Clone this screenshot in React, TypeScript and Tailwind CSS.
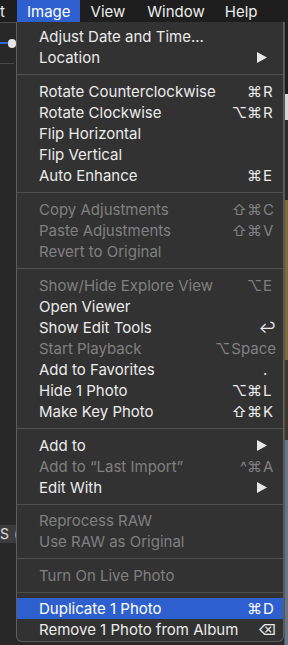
import React from 'react';

type Entry =
  | 'sep'
  | 'sep12'
  | {
      label: string;
      mods?: string;
      keyName?: string;
      off?: boolean;
      sub?: boolean;
      active?: boolean;
    };

const MENU: Entry[] = [
  { label: 'Adjust Date and Time...' },
  { label: 'Location', sub: true },
  'sep',
  { label: 'Rotate Counterclockwise', mods: '⌘', keyName: 'R' },
  { label: 'Rotate Clockwise', mods: '⌥⌘', keyName: 'R' },
  { label: 'Flip Horizontal' },
  { label: 'Flip Vertical' },
  { label: 'Auto Enhance', mods: '⌘', keyName: 'E' },
  'sep',
  { label: 'Copy Adjustments', mods: '⇧⌘', keyName: 'C', off: true },
  { label: 'Paste Adjustments', mods: '⇧⌘', keyName: 'V', off: true },
  { label: 'Revert to Original', off: true },
  'sep',
  { label: 'Show/Hide Explore View', mods: '⌥', keyName: 'E', off: true },
  { label: 'Open Viewer' },
  { label: 'Show Edit Tools', mods: '', keyName: '↩' },
  { label: 'Start Playback', mods: '⌥', keyName: 'Space', off: true },
  { label: 'Add to Favorites', mods: '', keyName: '.' },
  { label: 'Hide 1 Photo', mods: '⌥⌘', keyName: 'L' },
  { label: 'Make Key Photo', mods: '⇧⌘', keyName: 'K' },
  'sep',
  { label: 'Add to', sub: true },
  { label: 'Add to “Last Import”', mods: '^⌘', keyName: 'A', off: true },
  { label: 'Edit With', sub: true },
  'sep12',
  { label: 'Reprocess RAW', off: true },
  { label: 'Use RAW as Original', off: true },
  'sep',
  { label: 'Turn On Live Photo', off: true },
  'sep12',
  { label: 'Duplicate 1 Photo', mods: '⌘', keyName: 'D', active: true },
  { label: 'Remove 1 Photo from Album', mods: '', keyName: '⌫' },
];

function SubArrow() {
  return (
    <svg width="10" height="11" viewBox="0 0 10 11" className="ml-auto mr-[16px]">
      <polygon points="0,0 10,5.5 0,11" fill="#e8e8e8" />
    </svg>
  );
}

export default function App() {
  return (
    <div
      className="relative w-[288px] h-[645px] overflow-hidden bg-[#282828] text-[15px] leading-none select-none"
      style={{ fontFamily: 'Inter, "DejaVu Sans", sans-serif' }}
    >
      {/* menu bar */}
      <div className="flex h-[22px] items-center bg-[#1e1e1e] text-[#ececec]">
        <span className="w-[17px]">t</span>
        <span className="flex h-full items-center bg-[#2e5fcf] pl-[10px] pr-[9px] text-white">Image</span>
        <span className="ml-[11px]">View</span>
        <span className="ml-[22px]">Window</span>
        <span className="ml-[20px]">Help</span>
      </div>

      <div className="flex h-[623px]">
        {/* app edge on the left */}
        <div className="flex w-[16px] shrink-0 flex-col border-t border-[#4a4a4a]">
          <div className="mt-[15px] flex h-[10px] items-center">
            <div className="h-[2px] w-[8px] bg-[#2e6be0]" />
            <div className="h-[9px] w-[9px] rounded-full bg-[#e6e6e6]" />
          </div>
          <div className="mt-[15px] h-px w-[14px] bg-[#484848]" />
          <div className="mt-[461px] flex h-[18px] items-center bg-[#3c3c3c] text-[14px] text-[#dcdcdc]">
            <span>S</span>
            <span className="ml-[5px]">(</span>
          </div>
        </div>

        {/* the menu */}
        <div className="mb-[3px] flex w-[268px] shrink-0 flex-col rounded-b-[6px] border border-t-0 border-[#5e5e5e] bg-[#323232] pt-[4px] pb-[1px]">
          {MENU.map((e, i) =>
            e === 'sep' || e === 'sep12' ? (
              <div key={i} className={`flex items-center ${e === 'sep' ? 'h-[13px]' : 'h-[12px]'}`}>
                <div className="h-px w-full bg-[#4f4f4f]" />
              </div>
            ) : (
              <div
                key={i}
                className={`flex h-[21px] shrink-0 items-center pl-[22px] ${
                  e.active ? 'bg-[#2e5fcf] text-white' : e.off ? 'text-[#808080]' : 'text-[#ebebeb]'
                }`}
              >
                <span className="whitespace-nowrap">{e.label}</span>
                {e.sub && <SubArrow />}
                {e.keyName !== undefined && (
                  <span className="ml-auto flex items-baseline whitespace-nowrap pr-[7px]">
                    <span className="text-right">{e.mods}</span>
                    <span className="min-w-[14px] pl-px text-left">{e.keyName}</span>
                  </span>
                )}
              </div>
            )
          )}
        </div>

        {/* photo edge on the right */}
        <div className="flex w-[4px] shrink-0 flex-col border-l border-[#555]">
          <div className="h-[72px] bg-[#1f1f1f]" />
          <div className="h-[26px] bg-[#d8d8d8]" />
          <div className="h-[80px] bg-[#2a2a2a]" />
          <div className="h-[160px] bg-[#7c6c36]" />
          <div className="h-[80px] bg-[#3d3528]" />
          <div className="flex-1 bg-[#66748a]" />
        </div>
      </div>
    </div>
  );
}
